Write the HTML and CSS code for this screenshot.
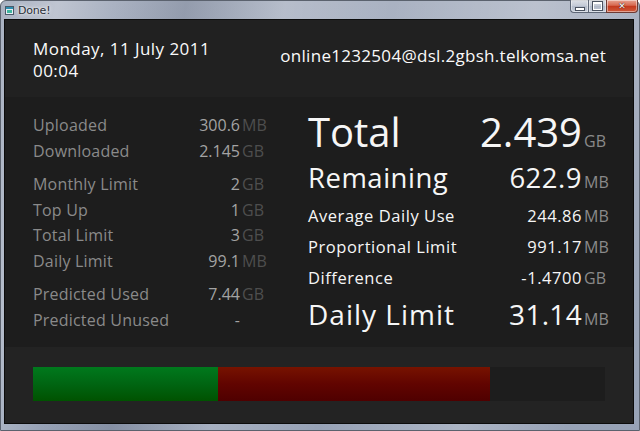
FILE: index.html
```html
<!DOCTYPE html>
<html>
<head>
<meta charset="utf-8">
<title>Done!</title>
<link rel="stylesheet" href="styles.css">
</head>
<body>
<div class="window">
  <div class="titlebar">
    <svg class="app-icon" width="9" height="9" viewBox="0 0 9 9">
      <rect x="0.5" y="0.5" width="8" height="8" fill="#e8eef4" stroke="#4a5a6a"/>
      <rect x="1" y="1" width="7" height="2" fill="#2e8fb0"/>
      <rect x="2" y="4" width="5" height="3" fill="#3fb6a0"/>
    </svg>
    <span class="title">Done!</span>
    <div class="caption-buttons">
      <div class="cap-btn cap-min"><span class="min-glyph"></span></div>
      <div class="cap-btn cap-max"><span class="max-glyph"></span></div>
      <div class="cap-btn cap-close"><span class="close-glyph">✕</span></div>
    </div>
  </div>

  <div class="client">
    <header class="head">
      <div class="when">
        <div>Monday, 11 July 2011</div>
        <div>00:04</div>
      </div>
      <div class="account">online1232504@dsl.2gbsh.telkomsa.net</div>
    </header>

    <main class="stats">
      <section class="details">
        <div class="group">
          <div class="row"><span class="label">Uploaded</span><span class="num">300.6</span><span class="unit">MB</span></div>
          <div class="row"><span class="label">Downloaded</span><span class="num">2.145</span><span class="unit">GB</span></div>
        </div>
        <div class="group">
          <div class="row"><span class="label">Monthly Limit</span><span class="num">2</span><span class="unit">GB</span></div>
          <div class="row"><span class="label">Top Up</span><span class="num">1</span><span class="unit">GB</span></div>
          <div class="row"><span class="label">Total Limit</span><span class="num">3</span><span class="unit">GB</span></div>
          <div class="row"><span class="label">Daily Limit</span><span class="num">99.1</span><span class="unit">MB</span></div>
        </div>
        <div class="group">
          <div class="row"><span class="label">Predicted Used</span><span class="num">7.44</span><span class="unit">GB</span></div>
          <div class="row"><span class="label">Predicted Unused</span><span class="num">-</span><span class="unit"></span></div>
        </div>
      </section>

      <section class="summary">
        <div class="srow big total"><span class="slabel">Total</span><span class="snum">2.439</span><span class="sunit">GB</span></div>
        <div class="srow mid remaining"><span class="slabel">Remaining</span><span class="snum">622.9</span><span class="sunit">MB</span></div>
        <div class="srow small"><span class="slabel">Average Daily Use</span><span class="snum">244.86</span><span class="sunit">MB</span></div>
        <div class="srow small"><span class="slabel">Proportional Limit</span><span class="snum">991.17</span><span class="sunit">MB</span></div>
        <div class="srow small"><span class="slabel">Difference</span><span class="snum">-1.4700</span><span class="sunit">GB</span></div>
        <div class="srow mid daily"><span class="slabel">Daily Limit</span><span class="snum">31.14</span><span class="sunit">MB</span></div>
      </section>
    </main>

    <footer class="usage">
      <div class="track">
        <div class="seg seg-used" style="width: 32.3%"></div>
        <div class="seg seg-over" style="width: 47.6%"></div>
      </div>
    </footer>
  </div>
</div>
</body>
</html>
```

FILE: styles.css
```css
html, body {
  margin: 0;
  padding: 0;
  width: 640px;
  height: 431px;
  overflow: hidden;
}

body {
  font-family: "Open Sans", "Noto Sans", sans-serif;
}

/* Aero-style window frame */
.window {
  position: relative;
  width: 640px;
  height: 431px;
  box-sizing: border-box;
  display: flex;
  flex-direction: column;
  background:
    linear-gradient(100deg, rgba(255,255,255,0) 0%, rgba(255,255,255,0.25) 8%, rgba(255,255,255,0) 16%, rgba(80,90,110,0.25) 26%, rgba(255,255,255,0.15) 40%, rgba(255,255,255,0) 55%, rgba(255,255,255,0.2) 75%, rgba(255,255,255,0) 90%),
    linear-gradient(180deg, #aab2c2 0%, #97a2b6 100%);
  border: 1px solid #5b626e;
  border-radius: 6px 6px 0 0;
}

.titlebar {
  height: 18px;
  display: flex;
  align-items: center;
  padding-left: 4px;
  flex-shrink: 0;
}

.app-icon {
  margin-top: 1px;
}

.title {
  margin-left: 4px;
  font-family: "DejaVu Sans", sans-serif;
  font-size: 11px;
  color: #2a2f38;
  text-shadow: 0 0 4px rgba(255,255,255,0.9), 0 0 2px rgba(255,255,255,0.8);
  letter-spacing: -0.2px;
}

.caption-buttons {
  position: absolute;
  top: -1px;
  right: 1px;
  display: flex;
}

.cap-btn {
  height: 13px;
  box-sizing: border-box;
  border: 1px solid #5d6676;
  border-top: none;
  display: flex;
  align-items: center;
  justify-content: center;
  background: linear-gradient(180deg, rgba(255,255,255,0.55) 0%, rgba(220,226,236,0.35) 50%, rgba(180,190,206,0.35) 51%, rgba(210,218,230,0.5) 100%);
  box-shadow: inset 0 0 0 1px rgba(255,255,255,0.45);
}

.cap-min {
  width: 18px;
  border-radius: 0 0 0 4px;
  border-right: none;
}

.cap-max {
  width: 18px;
  border-right: none;
}

.cap-close {
  width: 32px;
  border-radius: 0 0 4px 0;
  background: linear-gradient(180deg, #e8a493 0%, #d7684f 45%, #c3381d 50%, #cf5a3b 100%);
  border-color: #6e3a33;
}

.min-glyph {
  width: 8px;
  height: 2px;
  margin-top: 5px;
  background: #fff;
  border: 1px solid #4a5260;
}

.max-glyph {
  width: 7px;
  height: 5px;
  border: 1px solid #fff;
  border-top-width: 2px;
  outline: 1px solid #4a5260;
}

.close-glyph {
  color: #fff;
  font-family: "DejaVu Sans", sans-serif;
  font-size: 9px;
  font-weight: bold;
  line-height: 1;
  text-shadow: 0 0 1px #3a1a14, 0 0 1px #3a1a14;
}

/* Client area */
.client {
  flex: 1;
  margin: 0 5px 6px 3px;
  border: 1px solid #0c0c0c;
  display: flex;
  flex-direction: column;
  background: #1c1c1c;
}

.head {
  height: 77px;
  flex-shrink: 0;
  background: #212121;
  display: flex;
  justify-content: space-between;
  align-items: center;
  padding: 0 27px 0 28px;
  color: #fafafa;
  font-size: 17px;
  line-height: 22px;
}

.when {
  padding-top: 3px;
  letter-spacing: 0.45px;
}

.account {
  padding-bottom: 5px;
  letter-spacing: 0.3px;
}

.stats {
  height: 250px;
  flex-shrink: 0;
  background: #1d1d1d;
  display: flex;
  padding: 0 27px 0 28px;
  box-sizing: border-box;
}

.details {
  width: 231px;
  padding-top: 16px;
  font-size: 16px;
}

.group + .group {
  margin-top: 8px;
}

.row {
  display: grid;
  grid-template-columns: 1fr auto 24px;
  height: 25.5px;
  line-height: 25.5px;
}

.label {
  color: #8a8a8a;
  letter-spacing: 0.2px;
}

.num {
  color: #a3a3a3;
  text-align: right;
}

.unit {
  color: #4e4e4e;
  padding-left: 2px;
}

.summary {
  flex: 1;
  margin-left: 44px;
  padding-top: 11.5px;
  color: #f6f6f6;
}

.srow {
  display: grid;
  grid-template-columns: 1fr auto 24px;
  align-items: baseline;
}

.sunit {
  color: #8a8a8a;
  font-size: 16px;
  line-height: 16px;
  letter-spacing: 0;
  padding-left: 2px;
}

.big {
  font-size: 40px;
  height: 46px;
  line-height: 46px;
}

.mid {
  font-size: 27.5px;
  letter-spacing: 0.5px;
}

.remaining {
  height: 45.5px;
  line-height: 45.5px;
}

.small {
  font-size: 16.5px;
  letter-spacing: 0.55px;
  height: 31px;
  line-height: 31px;
}

.daily {
  font-size: 28px;
  letter-spacing: 1px;
  height: 42px;
  line-height: 42px;
}

.daily .snum {
  letter-spacing: 0.3px;
}

/* Usage bar */
.usage {
  flex: 1;
  background: #232323;
  padding: 20px 28px 0 28px;
}

.track {
  height: 34px;
  background: #1d1d1d;
  display: flex;
}

.seg {
  height: 100%;
}

.seg-used {
  background: linear-gradient(180deg, #00791d 0%, #006512 50%, #005200 100%);
}

.seg-over {
  background: linear-gradient(180deg, #771300 0%, #610400 50%, #4f0000 100%);
}
```
